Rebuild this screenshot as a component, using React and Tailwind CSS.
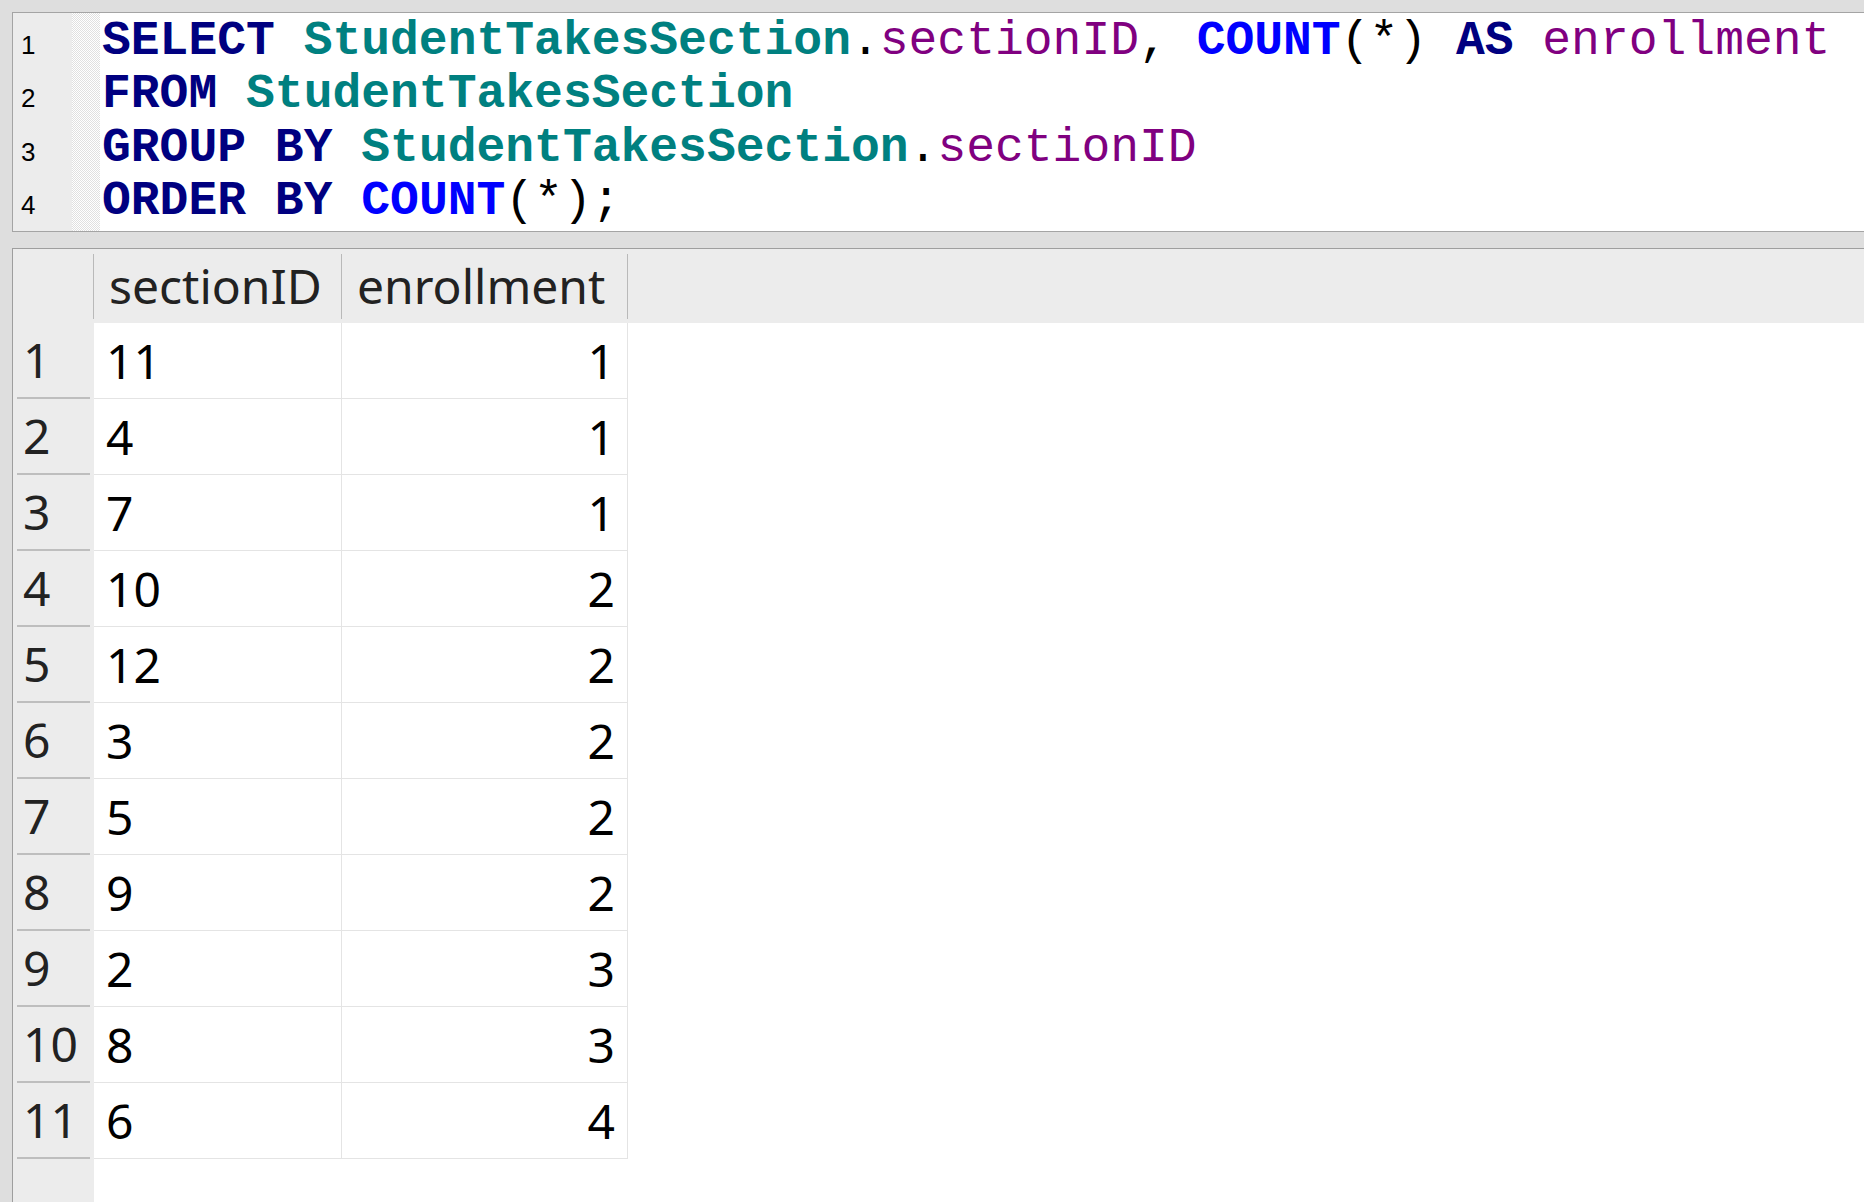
import React from 'react';

// token colours of the sql editor
const KW = 'text-[#000080] font-bold';
const TBL = 'text-[#008080] font-bold';
const COL = 'text-[#800080]';
const FN = 'text-[#0000ff] font-bold';
const PUN = 'text-black';

const lines = [
  [
    ['SELECT', KW], [' '], ['StudentTakesSection', TBL], ['.', PUN], ['sectionID', COL], [',', PUN], [' '],
    ['COUNT', FN], ['(*)', PUN], [' '], ['AS', KW], [' '], ['enrollment', COL],
  ],
  [['FROM', KW], [' '], ['StudentTakesSection', TBL]],
  [['GROUP', KW], [' '], ['BY', KW], [' '], ['StudentTakesSection', TBL], ['.', PUN], ['sectionID', COL]],
  [['ORDER', KW], [' '], ['BY', KW], [' '], ['COUNT', FN], ['(*);', PUN]],
];

const rows = [
  ['11', '1'], ['4', '1'], ['7', '1'], ['10', '2'], ['12', '2'], ['3', '2'],
  ['5', '2'], ['9', '2'], ['2', '3'], ['8', '3'], ['6', '4'],
];

function Editor() {
  return (
    <div className="h-[220px] shrink-0 flex border-t border-b border-l border-[#a4a4a4] bg-white">
      {/* line numbers */}
      <div className="w-[59px] bg-[#ececec] pt-[6px] pl-[8px] font-['Liberation_Sans',Arial,sans-serif] text-[26px] leading-[53.33px] text-black">
        {lines.map((_, i) => (
          <div key={i}>{i + 1}</div>
        ))}
      </div>
      {/* fold strip */}
      <div className="w-[28px] bg-[repeating-conic-gradient(#e0e0e0_0%_25%,#ffffff_0%_50%)] bg-[length:2px_2px]" />
      <div className="flex-1 pt-[2px] pl-[2px] font-['Liberation_Mono','Courier_New',monospace] text-[48px] leading-[53.33px] whitespace-pre">
        {lines.map((toks, i) => (
          <div key={i}>
            {toks.map(([t, c], j) => (
              <span key={j} className={c || ''}>{t}</span>
            ))}
          </div>
        ))}
      </div>
    </div>
  );
}

function HeaderSep() {
  return <div className="w-px h-[65px] self-center bg-[#b9b9b9]" />;
}

function ResultTable() {
  return (
    <div className="mt-[16px] flex-1 flex flex-col border-t border-l border-[#9e9e9e] bg-white font-['Noto_Sans','Open_Sans',sans-serif] text-[48px]">
      {/* header */}
      <div className="h-[74px] shrink-0 flex bg-[#ececec] text-[#222222]">
        <div className="w-[80px]" />
        <HeaderSep />
        <div className="w-[247px] flex items-center pl-[15px]">sectionID</div>
        <HeaderSep />
        <div className="w-[285px] flex items-center pl-[15px]">enrollment</div>
        <HeaderSep />
      </div>

      {rows.map(([id, n], i) => (
        <div key={i} className="h-[76px] shrink-0 flex">
          <div className="w-[81px] flex flex-col bg-[#ececec] text-[#222222]">
            <div className="flex-1 flex items-center pl-[10px]">{i + 1}</div>
            <div className="h-[2px] mx-[4px] bg-[#bebebe]" />
          </div>
          <div className="w-[248px] flex items-center pl-[12px] border-r border-b border-[#e4e4e4] text-black">{id}</div>
          <div className="w-[286px] flex items-center justify-end pr-[12px] border-r border-b border-[#e4e4e4] text-black">{n}</div>
        </div>
      ))}

      <div className="flex-1 flex">
        <div className="w-[81px] bg-[#ececec]" />
      </div>
    </div>
  );
}

export default function App() {
  return (
    <div className="h-[1202px] w-full overflow-hidden bg-[#dedede] pl-[12px] pt-[12px] flex flex-col">
      <Editor />
      <ResultTable />
    </div>
  );
}
